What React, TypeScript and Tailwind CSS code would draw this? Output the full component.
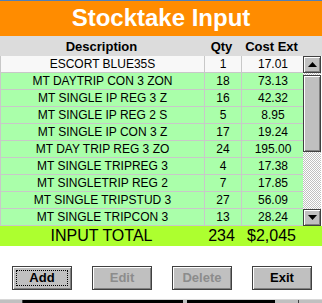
import React from "react";

const rows: [string, string, string][] = [
  ["ESCORT BLUE35S", "1", "17.01"],
  ["MT DAYTRIP CON 3 ZON", "18", "73.13"],
  ["MT SINGLE IP REG 3 Z", "16", "42.32"],
  ["MT SINGLE IP REG 2 S", "5", "8.95"],
  ["MT SINGLE IP CON 3 Z", "17", "19.24"],
  ["MT DAY TRIP REG 3 ZO", "24", "195.00"],
  ["MT SINGLE TRIPREG 3", "4", "17.38"],
  ["MT SINGLETRIP REG 2", "7", "17.85"],
  ["MT SINGLE TRIPSTUD 3", "27", "56.09"],
  ["MT SINGLE TRIPCON 3", "13", "28.24"],
];

function Btn({ label, disabled, focused }: { label: string; disabled?: boolean; focused?: boolean }) {
  return (
    <div className="w-[60px] h-[24px] border border-[#404040] bg-[#c0c0c0] shadow-[inset_1px_1px_0_#ffffff,inset_-1px_-1px_0_#808080] flex items-center justify-center p-[3px]">
      <div
        className={
          "w-full h-full flex items-center justify-center text-[13px] font-bold " +
          (focused ? "border border-dotted border-black " : "border border-transparent ") +
          (disabled ? "text-[#8c8c8c]" : "text-black")
        }
      >
        {label}
      </div>
    </div>
  );
}

function ScrollBtn({ up }: { up?: boolean }) {
  return (
    <div className="h-[17px] w-full bg-[#c0c0c0] border border-[#404040] shadow-[inset_1px_1px_0_#ffffff,inset_-1px_-1px_0_#808080] flex items-center justify-center">
      <svg width="9" height="5" viewBox="0 0 9 5">
        {up ? <polygon points="0,5 9,5 4.5,0" fill="#000" /> : <polygon points="0,0 9,0 4.5,5" fill="#000" />}
      </svg>
    </div>
  );
}

export default function App() {
  return (
    <div className="w-[322px] h-[303px] bg-white overflow-hidden flex flex-col font-['Liberation_Sans',Arial,sans-serif] text-black">
      <div className="h-[1px] bg-[#5080b8]" />
      <div className="h-[35px] bg-[#ff8c00] flex items-center justify-center text-white font-bold text-[24px] leading-none">
        Stocktake Input
      </div>
      <div className="h-[21px] bg-[#dcdcdc] grid grid-cols-[203px_37px_63px_19px] items-center text-[13px] font-bold leading-none">
        <div className="text-center">Description</div>
        <div className="text-center">Qty</div>
        <div className="text-center">Cost Ext</div>
        <div />
      </div>
      <div className="flex h-[170px]">
        <div className="w-[303px] flex flex-col">
          {rows.map((r, i) => (
            <div
              key={i}
              className={
                "h-[17px] grid grid-cols-[203px_37px_63px] border-b border-l border-[#c8c8c8] text-[12px] leading-none " +
                (i === 0 ? "bg-[#f8f8f8]" : "bg-[#aaffaa]")
              }
            >
              <div className="flex items-center justify-center whitespace-nowrap overflow-hidden">{r[0]}</div>
              <div className="flex items-center justify-center border-l border-[#c8c8c8]">{r[1]}</div>
              <div className="flex items-center justify-center border-l border-[#c8c8c8]">{r[2]}</div>
            </div>
          ))}
        </div>
        <div className="w-[18px] flex flex-col">
          <ScrollBtn up />
          <div className="h-[2px] bg-[repeating-conic-gradient(#c0c0c0_0%_25%,#ffffff_0%_50%)] bg-[length:2px_2px]" />
          <div className="h-[77px] bg-[#c0c0c0] border border-[#404040] shadow-[inset_1px_1px_0_#ffffff,inset_-1px_-1px_0_#808080]" />
          <div className="flex-1 bg-[repeating-conic-gradient(#c0c0c0_0%_25%,#ffffff_0%_50%)] bg-[length:2px_2px]" />
          <ScrollBtn />
        </div>
        <div className="w-[1px] bg-white" />
      </div>
      <div className="h-[20px] bg-[#adff2f] grid grid-cols-[203px_37px_63px_19px] items-center text-[16px] leading-none">
        <div className="text-center">INPUT TOTAL</div>
        <div className="text-center">234</div>
        <div className="text-center">$2,045</div>
        <div />
      </div>
      <div className="h-[20px]" />
      <div className="flex gap-5 pl-3">
        <Btn label="Add" focused />
        <Btn label="Edit" disabled />
        <Btn label="Delete" disabled />
        <Btn label="Exit" />
      </div>
      <div className="h-[9px]" />
      <div className="h-[1px] bg-[#d8d8d8]" />
      <div className="h-[3px] flex">
        <div className="w-[22px] bg-[#c0c0c0]" />
        <div className="w-[1px] bg-[#404040]" />
        <div className="w-[160px] bg-black" />
        <div className="w-[4px] bg-[#c0c0c0]" />
        <div className="w-[88px] bg-black" />
        <div className="w-[23px] bg-[#c0c0c0]" />
        <div className="w-[1px] bg-[#404040]" />
        <div className="flex-1 bg-[#c0c0c0]" />
      </div>
    </div>
  );
}
